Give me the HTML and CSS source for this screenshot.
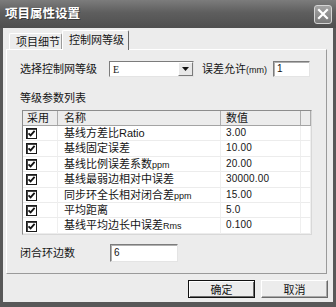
FILE: index.html
```html
<!DOCTYPE html>
<html lang="zh">
<head>
    <meta charset="UTF-8">
    <title>项目属性设置</title>
    <link rel="stylesheet" href="styles.css">
</head>
<body>
    <div class="window">
        <div class="titlebar">
            <span class="title">项目属性设置</span>
            <span class="close">
                <svg width="12" height="12" viewBox="0 0 12 12"><path d="M2 2 L10 10 M10 2 L2 10" stroke="#fff" stroke-width="2.2" stroke-linecap="square"/></svg>
            </span>
        </div>
        <div class="client">
            <div class="tabs">
                <div class="tab">项目细节</div>
                <div class="tab active">控制网等级</div>
            </div>
            <div class="panel">
                <div class="row-select">
                    <span class="label grade-label">选择控制网等级</span>
                    <div class="combo">
                        <span class="combo-text">E</span>
                        <span class="combo-btn">
                            <svg width="7" height="4" viewBox="0 0 7 4"><path d="M0 0 H7 L3.5 4 Z" fill="#111"/></svg>
                        </span>
                    </div>
                    <span class="label tol-label">误差允许<small>(mm)</small></span>
                    <div class="edit tol-input">1</div>
                </div>

                <div class="list-title">等级参数列表</div>

                <div class="listview">
                    <div class="lv-head">
                        <div class="hc">采用</div>
                        <div class="hc hc-name">名称</div>
                        <div class="hc hc-val">数值</div>
                        <div class="hc"></div>
                    </div>
                    <div class="lv-row">
                        <div class="c box"><span class="check"></span></div>
                        <div class="c name">基线方差比Ratio</div>
                        <div class="c val">3.00</div>
                        <div class="c"></div>
                    </div>
                    <div class="lv-row">
                        <div class="c box"><span class="check"></span></div>
                        <div class="c name">基线固定误差</div>
                        <div class="c val">10.00</div>
                        <div class="c"></div>
                    </div>
                    <div class="lv-row">
                        <div class="c box"><span class="check"></span></div>
                        <div class="c name">基线比例误差系数<small>ppm</small></div>
                        <div class="c val">20.00</div>
                        <div class="c"></div>
                    </div>
                    <div class="lv-row">
                        <div class="c box"><span class="check"></span></div>
                        <div class="c name">基线最弱边相对中误差</div>
                        <div class="c val">30000.00</div>
                        <div class="c"></div>
                    </div>
                    <div class="lv-row">
                        <div class="c box"><span class="check"></span></div>
                        <div class="c name">同步环全长相对闭合差<small>ppm</small></div>
                        <div class="c val">15.00</div>
                        <div class="c"></div>
                    </div>
                    <div class="lv-row">
                        <div class="c box"><span class="check"></span></div>
                        <div class="c name">平均距离</div>
                        <div class="c val">5.0</div>
                        <div class="c"></div>
                    </div>
                    <div class="lv-row">
                        <div class="c box"><span class="check"></span></div>
                        <div class="c name">基线平均边长中误差<small>Rms</small></div>
                        <div class="c val">0.100</div>
                        <div class="c"></div>
                    </div>
                    <div class="lv-row">
                        <div class="c box"></div>
                        <div class="c name"></div>
                        <div class="c val"></div>
                        <div class="c"></div>
                    </div>
                </div>

                <div class="row-loop">
                    <span class="label loop-label">闭合环边数</span>
                    <div class="edit loop-input">6</div>
                </div>
            </div>

            <div class="buttons">
                <button class="btn default">确定</button>
                <button class="btn">取消</button>
            </div>
        </div>
    </div>
</body>
</html>
```

FILE: styles.css
```css
* {
    box-sizing: border-box;
}
body {
    margin: 0;
    background: #575757;
    font-family: "Liberation Sans", "Noto Sans CJK SC", sans-serif;
    font-size: 11px;
    color: #151515;
}
.window {
    width: 336px;
    height: 307px;
    display: flex;
    flex-direction: column;
    background: #585858;
    padding: 0 3px 5px 3px;
}

/* title bar */
.titlebar {
    height: 28px;
    margin: 0 -3px;
    display: flex;
    align-items: center;
    justify-content: space-between;
    padding: 0 4px 0 5px;
    background: linear-gradient(#7c7c7c, #5e5e5e 45%, #4f4f4f);
}
.title {
    color: #fff;
    font-weight: bold;
    font-size: 12.5px;
    line-height: 14px;
    text-shadow: 1px 1px 0 #3a3a3a;
}
.close {
    width: 18px;
    height: 19px;
    border: 1px solid #d4d4d4;
    border-radius: 3px;
    background: linear-gradient(#a4a4a4, #7a7a7a);
    display: flex;
    align-items: center;
    justify-content: center;
}

/* dialog body */
.client {
    flex: 1;
    background: #ececec;
    padding-left: 3px;
    display: flex;
    flex-direction: column;
}
.tabs {
    height: 21px;
    display: flex;
    align-items: flex-end;
    padding-left: 3px;
}
.tab {
    height: 16px;
    width: 53px;
    padding-left: 6px;
    line-height: 16px;
    border-top: 1px solid #fff;
    border-left: 1px solid #fff;
    border-right: 1px solid #9a9a9a;
    border-radius: 2px 2px 0 0;
    background: #ececec;
}
.tab.active {
    position: relative;
    z-index: 1;
    height: 20px;
    width: 67px;
    margin-bottom: -1px;
    line-height: 19px;
    border-right: 1px solid #6a6a6a;
}
.panel {
    width: 321px;
    height: 225px;
    border-top: 1px solid #fff;
    border-left: 1px solid #fff;
    border-right: 1px solid #9a9a9a;
    border-bottom: 1px solid #9a9a9a;
    padding: 11px 0 0 13px;
}
.label {
    line-height: 14px;
}
.label small {
    font-size: 9px;
}

.row-select {
    display: flex;
    align-items: center;
    height: 16px;
}
.grade-label {
    width: 89px;
}
.combo {
    width: 85px;
    height: 16px;
    display: flex;
    align-items: center;
    background: #fff;
    border: 1px solid;
    border-color: #7c7c7c #e4e4e4 #e4e4e4 #7c7c7c;
}
.combo-text {
    flex: 1;
    padding-left: 3px;
    font-size: 10px;
    font-family: "Liberation Serif", serif;
}
.combo-btn {
    width: 15px;
    height: 14px;
    display: flex;
    align-items: center;
    justify-content: center;
    background: #e8e8e8;
    border: 1px solid;
    border-color: #fff #7a7a7a #7a7a7a #fff;
}
.tol-label {
    width: 71px;
    margin-left: 8px;
}
.edit {
    height: 16px;
    background: #fff;
    border: 1px solid;
    border-color: #7c7c7c #e4e4e4 #e4e4e4 #7c7c7c;
    box-shadow: inset 1px 1px 0 #b0b0b0;
    padding-left: 3px;
    line-height: 14px;
    font-size: 10px;
}
.tol-input {
    width: 37px;
}

.list-title {
    margin-top: 14px;
    line-height: 14px;
}

/* list view */
.listview {
    margin-top: 5px;
    margin-left: 2px;
    width: 290px;
    height: 125px;
    overflow: hidden;
    background: #fff;
    border: 1px solid;
    border-color: #8c8c8c #d8d8d8 #d8d8d8 #8c8c8c;
}
.lv-head,
.lv-row {
    display: grid;
    grid-template-columns: 35px 163px 80px 10px;
}
.lv-head {
    height: 15px;
    background: #ececec;
    border-bottom: 1px solid #a4a4a4;
}
.hc {
    line-height: 14px;
    padding-left: 4px;
    border-right: 1px solid #acacac;
}
.hc-name {
    padding-left: 6px;
}
.hc-val {
    padding-left: 5px;
}
.lv-row {
    height: 15.4px;
    border-bottom: 1px solid #ececec;
}
.c {
    line-height: 14.4px;
    padding-left: 3px;
    border-right: 1px solid #efefef;
    white-space: nowrap;
}
.c.box {
    display: flex;
    align-items: center;
}
.c.name {
    padding-left: 6px;
}
.c.name small {
    font-size: 9px;
}
.c.val {
    padding-left: 5px;
    font-size: 10px;
    letter-spacing: 0.2px;
}
.check {
    width: 11px;
    height: 11px;
    border: 1px solid #1a1a1a;
    box-shadow: inset 1px 1px 0 #444;
    background: #fff url("data:image/svg+xml;utf8,<svg xmlns='http://www.w3.org/2000/svg' width='9' height='9' viewBox='0 0 9 9'><path d='M1.5 4.3 L3.6 6.4 L7.6 1.8' fill='none' stroke='%23111' stroke-width='1.8'/></svg>") no-repeat center;
}

.row-loop {
    margin-top: 9px;
    display: flex;
    align-items: center;
}
.loop-label {
    width: 90px;
}
.loop-input {
    width: 68px;
    height: 18px;
    line-height: 16px;
}

/* buttons */
.buttons {
    margin-top: 6px;
    display: flex;
    justify-content: flex-end;
    gap: 6px;
    padding-right: 5px;
}
.btn {
    width: 67px;
    height: 18px;
    padding: 0;
    font-family: "Liberation Sans", "Noto Sans CJK SC", sans-serif;
    font-size: 11px;
    color: #151515;
    background: #ececec;
    border: 1px solid;
    border-color: #fff #6a6a6a #6a6a6a #fff;
    box-shadow: inset -1px -1px 0 #a8a8a8;
}
.btn.default {
    border: 1px solid #111;
    box-shadow: inset 1px 1px 0 #fff, inset -1px -1px 0 #6a6a6a;
}
```
